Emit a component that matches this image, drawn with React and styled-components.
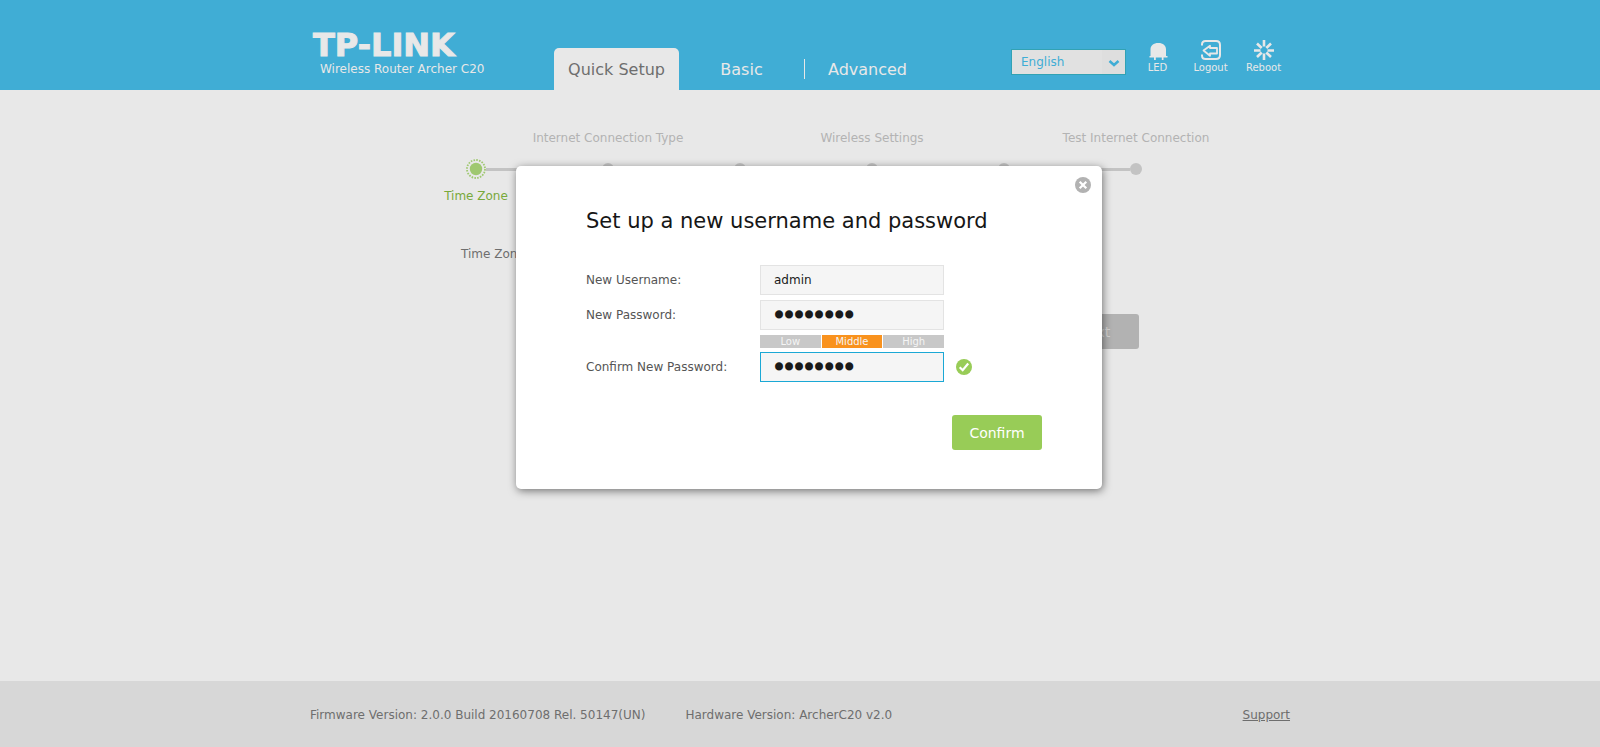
import React from "react";
import styled, { createGlobalStyle } from "styled-components";

const GlobalStyle = createGlobalStyle`
  *, *::before, *::after { box-sizing: border-box; }
  body {
    margin: 0;
    background: #e8e8e8;
    color: #6e6e6e;
    font: 12px/16px "DejaVu Sans", Verdana, sans-serif;
  }
  button, input, select { font: inherit; }
`;

const Page = styled.div`
  display: flex;
  flex-direction: column;
  min-height: 100vh;
`;

const Container = styled.div`
  width: 100%;
  max-width: 980px;
  margin: 0 auto;
`;

const Header = styled.header`
  background: #40add5;
  color: #e8e8e8;
`;

const HeaderRow = styled(Container)`
  display: flex;
  align-items: flex-end;
  height: 90px;
`;

const Brand = styled.div`
  align-self: flex-start;
  width: 244px;
  padding-top: 29px;
`;

const Wordmark = styled.div`
  font-size: 32px;
  line-height: 32px;
  font-weight: bold;
  padding-left: 3px;
  -webkit-text-stroke: 1px currentColor;
`;

const Model = styled.div`
  padding-left: 10px;
`;

const Tabs = styled.nav`
  display: flex;
`;

const Tab = styled.a`
  display: flex;
  justify-content: center;
  width: 125px;
  height: 42px;
  padding-top: 12px;
  border-radius: 5px 5px 0 0;
  background: ${(p) => (p.$active ? "#e8e8e8" : "transparent")};
  color: ${(p) => (p.$active ? "#6e6e6e" : "#e8e8e8")};
  font-size: 16px;
  line-height: 20px;
  text-decoration: none;
`;

const TabDivider = styled.span`
  width: 1px;
  height: 20px;
  margin: 11px 0;
  background: #e8e8e8;
`;

const Tools = styled.div`
  display: flex;
  align-self: flex-start;
  align-items: flex-start;
  margin-left: auto;
  padding-top: 40px;
`;

const LanguageBox = styled.label`
  position: relative;
  margin: 9px 5px 0 0;
`;

const LanguageSelect = styled.select`
  display: block;
  width: 115px;
  height: 26px;
  padding: 0 24px 0 9px;
  border: 1px solid #32a2b4;
  border-radius: 0;
  background: #e1e1e1;
  color: #40add5;
  appearance: none;
`;

const Chevron = styled.svg`
  position: absolute;
  top: 1px;
  right: 1px;
  width: 23px;
  height: 24px;
  background: #dedede;
  pointer-events: none;
`;

const ToolButton = styled.button`
  display: flex;
  flex-direction: column;
  align-items: center;
  width: 53px;
  padding: 0;
  border: 0;
  background: none;
  color: #e8e8e8;
  font-size: 10px;
  line-height: 16px;
`;

const Main = styled.main`
  flex: 1;
  padding-top: 40px;
`;

const Steps = styled.ol`
  display: grid;
  grid-template-columns: repeat(6, minmax(0, 1fr));
  margin: 0 88px 0 100px;
  padding: 0;
  list-style: none;
`;

const Step = styled.li`
  display: flex;
  flex-direction: column;
`;

const StepLabel = styled.span`
  display: flex;
  justify-content: center;
  height: 16px;
  color: ${(p) => (p.$active ? "#78a93b" : "#b3b3b3")};
  white-space: nowrap;
`;

const Track = styled.div`
  display: flex;
  align-items: center;
  height: 20px;
  margin: 13px 0 9px;
`;

const Bar = styled.span`
  flex: 1;
  height: 3px;
  background: ${(p) => (p.$hidden ? "transparent" : "#c3c3c3")};
`;

const Dot = styled.span`
  width: 12px;
  height: 12px;
  border-radius: 50%;
  background: #c3c3c3;
`;

const SetupForm = styled.form`
  margin: 42px 151px 0;
`;

const ActionRow = styled.div`
  display: flex;
  justify-content: flex-end;
  margin-top: ${(p) => p.$space}px;
`;

const Button = styled.button`
  width: 90px;
  height: 35px;
  padding: 0;
  border: 0;
  border-radius: 3px;
  background: ${(p) => (p.$muted ? "#b2b2b2" : "#98cc57")};
  color: ${(p) => (p.$muted ? "#d5d5d5" : "#fff")};
  font-size: 14px;
  line-height: 20px;
`;

const Overlay = styled.div`
  position: absolute;
  inset: 0;
  display: flex;
  justify-content: center;
  align-items: flex-start;
  padding: 166px 0 0 18px;
`;

const Dialog = styled.section`
  position: relative;
  width: 586px;
  padding: 43px 60px 39px 70px;
  border-radius: 5px;
  background: #fff;
  box-shadow: 1px 2px 9px rgba(0, 0, 0, 0.5);
`;

const CloseButton = styled.button`
  position: absolute;
  top: 11px;
  right: 11px;
  width: 16px;
  height: 16px;
  padding: 0;
  border: 0;
  background: none;
  svg { display: block; }
`;

const Title = styled.h1`
  margin: 0 0 32px;
  color: #161616;
  font-size: 21px;
  line-height: 24px;
  font-weight: normal;
`;

const Field = styled.div`
  display: flex;
  align-items: center;
  margin-bottom: 5px;
`;

const FieldLabel = styled.label`
  width: 174px;
  color: #555;
`;

const TextInput = styled.input`
  width: 184px;
  height: 30px;
  margin-right: 12px;
  padding: 0 13px;
  border: 1px solid ${(p) => (p.$current ? "#1ba8d5" : "#e3e3e3")};
  border-radius: 0;
  background: #f5f5f5;
  color: #1a1a1a;
  outline: none;
`;

const PasswordInput = styled(TextInput)`
  font-size: 17px;
  -webkit-text-stroke: 3px #1a1a1a;
`;

const Strength = styled.div`
  display: grid;
  grid-template-columns: repeat(3, 1fr);
  gap: 1px;
  width: 184px;
  margin: 0 0 4px 174px;
`;

const StrengthLevel = styled.span`
  height: 13px;
  background: ${(p) => (p.$active ? "#f9921e" : "#c8c8c8")};
  color: #f5f5f5;
  font-size: 10px;
  line-height: 13px;
  text-align: center;
`;

const Footer = styled.footer`
  background: #d7d7d7;
`;

const FooterRow = styled(Container)`
  display: flex;
  align-items: center;
  gap: 40px;
  height: 66px;
  padding-top: 1px;
`;

const SupportLink = styled.a`
  margin-left: auto;
  color: #6e6e6e;
`;

const LedIcon = () => (
  <svg width="20" height="20" viewBox="0 0 20 20" fill="currentColor" aria-hidden="true">
    <path d="M2.500 16V9.500C2.500 5.500 5.500 3 10.300 3s7.700 2.500 7.700 6.500V16h1.500v1.500h-4V20h-1.700v-2.500h-6V20H6v-2.500H1.500V16z" />
  </svg>
);

const LogoutIcon = () => (
  <svg width="20" height="20" viewBox="0 0 20 20" fill="none" stroke="currentColor" strokeWidth="2" aria-hidden="true">
    <path d="M1 5.500V4.500Q1 1 4.500 1H15q4 0 4 4v10q0 4-4 4H4.500Q1 19 1 15.500v-1" />
    <path d="M2.500 10.500 9 5.700V8h7v5.500H9v2.300z" strokeWidth="1.800" strokeLinejoin="round" />
  </svg>
);

const RebootIcon = () => (
  <svg width="20" height="20" viewBox="0 0 20 20" stroke="currentColor" strokeWidth="2.600" aria-hidden="true">
    <path d="M10 0v6.500M10 13.500V20M0 10.500h6.500M13.500 10.500H20M3 3.500l4.700 4.500M12.300 12.500l4.700 4.500M17 3.500 12.300 8M7.700 12.500 3 17" />
  </svg>
);

const ActiveMarker = () => (
  <svg width="20" height="20" viewBox="0 0 20 20" aria-hidden="true">
    <circle cx="10" cy="10" r="6.200" fill="#9fc870" />
    <circle cx="10" cy="10" r="9" fill="none" stroke="#9fc870" strokeWidth="1.800" strokeDasharray="1.600 1.227" />
  </svg>
);

const CloseIcon = () => (
  <svg width="16" height="16" viewBox="0 0 16 16" aria-hidden="true">
    <circle cx="8" cy="8" r="8" fill="#b2b2b2" />
    <path d="m4.700 4.700 6.600 6.600m0-6.600-6.600 6.600" stroke="#fff" strokeWidth="2.200" />
  </svg>
);

const CheckIcon = () => (
  <svg width="16" height="16" viewBox="0 0 16 16" role="img" aria-label="Passwords match">
    <circle cx="8" cy="8" r="8" fill="#98cc57" />
    <path d="m3.700 8.200 3 3 5.500-6.700" fill="none" stroke="#fff" strokeWidth="2.200" />
  </svg>
);

const tools = [
  { label: "LED", Icon: LedIcon },
  { label: "Logout", Icon: LogoutIcon },
  { label: "Reboot", Icon: RebootIcon },
];

const steps = [
  { below: "Time Zone", active: true },
  { above: "Internet Connection Type" },
  {},
  { above: "Wireless Settings" },
  {},
  { above: "Test Internet Connection" },
];

export default function App() {
  return (
    <Page>
      <GlobalStyle />
      <Header>
        <HeaderRow>
          <Brand>
            <Wordmark>TP-LINK</Wordmark>
            <Model>Wireless Router Archer C20</Model>
          </Brand>
          <Tabs>
            <Tab href="#quick" $active>Quick Setup</Tab>
            <Tab href="#basic">Basic</Tab>
            <TabDivider />
            <Tab href="#advanced">Advanced</Tab>
          </Tabs>
          <Tools>
            <LanguageBox>
              <LanguageSelect aria-label="Language" defaultValue="English">
                <option>English</option>
              </LanguageSelect>
              <Chevron viewBox="0 0 23 24" aria-hidden="true">
                <path d="m7.500 11 4.500 4 4.500-4" fill="none" stroke="#40add5" strokeWidth="2.500" />
              </Chevron>
            </LanguageBox>
            {tools.map(({ label, Icon }) => (
              <ToolButton key={label} type="button">
                <Icon />
                {label}
              </ToolButton>
            ))}
          </Tools>
        </HeaderRow>
      </Header>

      <Main>
        <Container>
          <Steps>
            {steps.map((step, i) => (
              <Step key={i}>
                <StepLabel>{step.above}</StepLabel>
                <Track>
                  <Bar $hidden={i === 0} />
                  {step.active ? <ActiveMarker /> : <Dot />}
                  <Bar $hidden={i === steps.length - 1} />
                </Track>
                <StepLabel $active={step.active}>{step.below}</StepLabel>
              </Step>
            ))}
          </Steps>
          <SetupForm>
            <span>Time Zone:</span>
            <ActionRow $space={52}>
              <Button type="button" $muted>Next</Button>
            </ActionRow>
          </SetupForm>
        </Container>
      </Main>

      <Footer>
        <FooterRow>
          <span>Firmware Version: 2.0.0 Build 20160708 Rel. 50147(UN)</span>
          <span>Hardware Version: ArcherC20 v2.0</span>
          <SupportLink href="#support">Support</SupportLink>
        </FooterRow>
      </Footer>

      <Overlay>
        <Dialog role="dialog" aria-labelledby="dialog-title">
          <CloseButton type="button" aria-label="Close">
            <CloseIcon />
          </CloseButton>
          <Title id="dialog-title">Set up a new username and password</Title>
          <form>
            <Field>
              <FieldLabel htmlFor="username">New Username:</FieldLabel>
              <TextInput id="username" type="text" defaultValue="admin" />
            </Field>
            <Field>
              <FieldLabel htmlFor="password">New Password:</FieldLabel>
              <PasswordInput id="password" type="password" defaultValue="password" />
            </Field>
            <Strength>
              <StrengthLevel>Low</StrengthLevel>
              <StrengthLevel $active>Middle</StrengthLevel>
              <StrengthLevel>High</StrengthLevel>
            </Strength>
            <Field>
              <FieldLabel htmlFor="confirm">Confirm New Password:</FieldLabel>
              <PasswordInput id="confirm" type="password" defaultValue="password" $current />
              <CheckIcon />
            </Field>
            <ActionRow $space={33}>
              <Button type="button">Confirm</Button>
            </ActionRow>
          </form>
        </Dialog>
      </Overlay>
    </Page>
  );
}
